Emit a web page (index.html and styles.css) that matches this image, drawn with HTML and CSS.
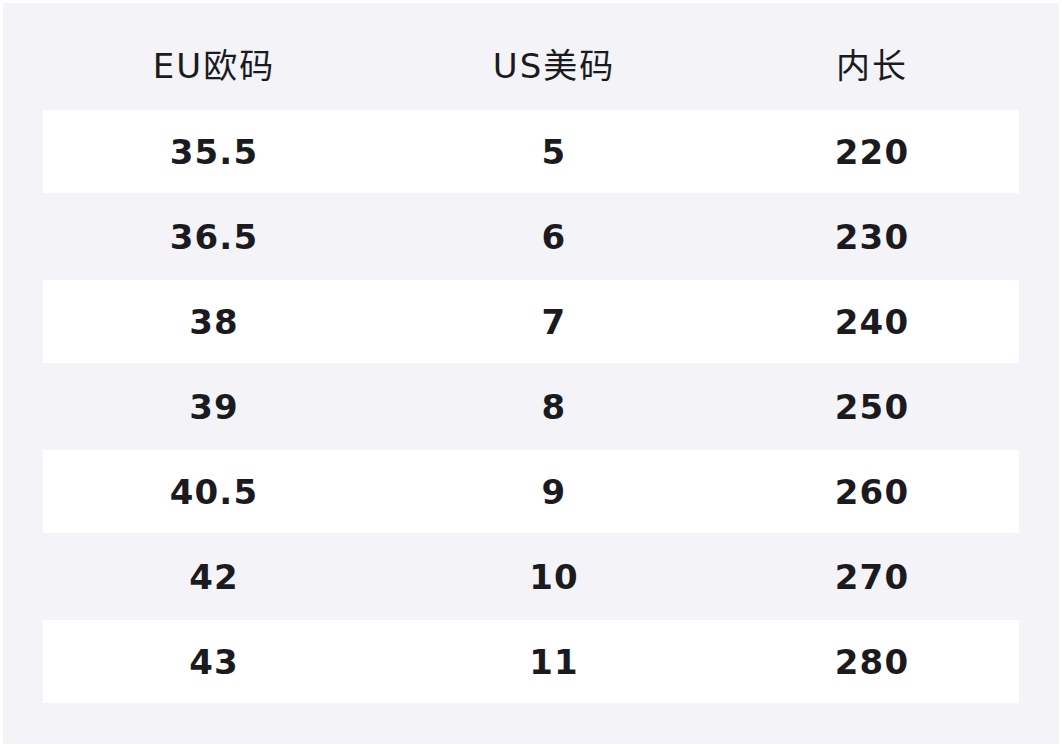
FILE: index.html
```html
<!DOCTYPE html>
<html lang="zh">
<head>
<meta charset="utf-8">
<link rel="stylesheet" href="styles.css">
</head>
<body>
<div class="card">
  <div class="head row">
    <div class="cell">EU欧码</div>
    <div class="cell">US美码</div>
    <div class="cell">内长</div>
  </div>
  <div class="body">
    <div class="row data white"><div class="cell">35.5</div><div class="cell">5</div><div class="cell">220</div></div>
    <div class="row data"><div class="cell">36.5</div><div class="cell">6</div><div class="cell">230</div></div>
    <div class="row data white"><div class="cell">38</div><div class="cell">7</div><div class="cell">240</div></div>
    <div class="row data"><div class="cell">39</div><div class="cell">8</div><div class="cell">250</div></div>
    <div class="row data white"><div class="cell">40.5</div><div class="cell">9</div><div class="cell">260</div></div>
    <div class="row data"><div class="cell">42</div><div class="cell">10</div><div class="cell">270</div></div>
    <div class="row data white"><div class="cell">43</div><div class="cell">11</div><div class="cell">280</div></div>
  </div>
</div>
</body>
</html>
```
FILE: styles.css
```css
html, body {
  margin: 0;
  padding: 0;
  background: #ffffff;
}
body {
  padding: 3px;
  width: 1056px;
  height: 742px;
  font-family: "DejaVu Sans", "Noto Sans CJK SC", sans-serif;
  color: #1b1b1f;
}
.card {
  background: #f3f3f8;
  width: 1056px;
  height: 741px;
  box-sizing: border-box;
  padding: 0 40px 0 40px;
}
.row {
  display: grid;
  grid-template-columns: 340px 340px 1fr;
  align-items: center;
  text-align: center;
}
.head {
  height: 107px;
  font-size: 34px;
  letter-spacing: 2px;
}
.head .cell {
  padding-top: 14px;
  padding-left: 2px;
}
.body {
  display: flex;
  flex-direction: column;
  gap: 2px;
}
.data {
  height: 83px;
  font-size: 34px;
  font-weight: bold;
  letter-spacing: 1.2px;
}
.data .cell {
  padding-left: 2px;
}
.white {
  background: #ffffff;
}
```
